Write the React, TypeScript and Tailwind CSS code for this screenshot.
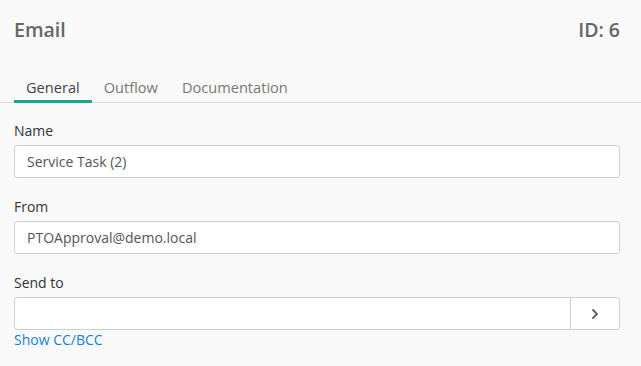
import { ChevronRight } from "lucide-react"

function Field({ label, value }: { label: string; value: string }) {
  return (
    <div>
      <div className="text-[14px] leading-[20px] text-[#333]">{label}</div>
      <div className="mt-[4px] flex h-[33px] items-center rounded-[3px] border border-[#cfcfcf] bg-white px-[12px] text-[14px] text-[#555]">
        {value}
      </div>
    </div>
  )
}

export default function App() {
  return (
    <div
      className="h-[366px] w-[641px] overflow-hidden bg-[#f9f9f9]"
      style={{ fontFamily: '"Open Sans", "Noto Sans", sans-serif' }}
    >
      <div className="flex items-center justify-between pl-[14px] pr-[21px] pt-[15px] text-[19.5px] font-semibold leading-[29px] text-[#666]">
        <span>Email</span>
        <span>ID: 6</span>
      </div>
      <div className="mt-[33px] flex items-start border-b border-[#dcdcdc] px-[14px] text-[14.6px] leading-[20px]">
        <div className="-mb-px border-b-[3px] border-[#1aa68a] px-[12px] pb-[3px] text-[#444]">General</div>
        <div className="px-[12px] text-[#777]">Outflow</div>
        <div className="px-[12px] text-[#777]">Documentation</div>
      </div>
      <div className="mt-[18px] flex flex-col gap-[19px] pl-[14px] pr-[21px]">
        <Field label="Name" value="Service Task (2)" />
        <Field label="From" value="PTOApproval@demo.local" />
        <div>
          <div className="text-[14px] leading-[20px] text-[#333]">Send to</div>
          <div className="mt-[4px] flex h-[33px] rounded-[3px] border border-[#cfcfcf] bg-white">
            <div className="flex-1" />
            <div className="flex w-[49px] items-center justify-center border-l border-[#cfcfcf] text-[#666]">
              <ChevronRight size={16} strokeWidth={3} />
            </div>
          </div>
          <div className="text-[14px] leading-[20px] text-[#1a7fd4]">Show CC/BCC</div>
        </div>
      </div>
    </div>
  )
}
